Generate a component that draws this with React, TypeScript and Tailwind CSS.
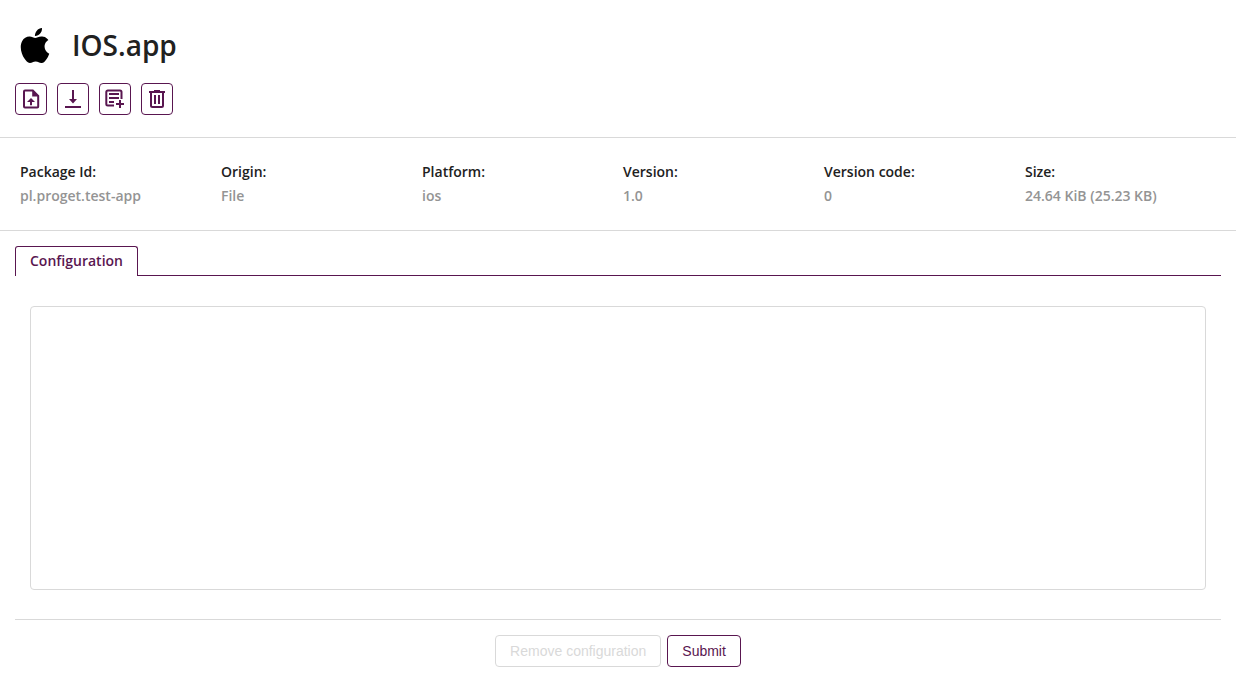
import React, { useState } from "react"
import { SiApple } from "react-icons/si"

const UploadFileIcon = () => (
  <svg viewBox="0 0 20 20" className="h-5 w-5" fill="currentColor" aria-hidden="true">
    <path
      fillRule="evenodd"
      d="M4 0.5H12.2L18.2 6.5V17.5A2 2 0 0 1 16.2 19.5H4A2 2 0 0 1 2 17.5V2.5A2 2 0 0 1 4 0.5ZM4 2.5V17.5H16.2V7.5H11.2V2.5Z"
    />
    <path d="M10 9L14 13H11V16.2H9V13H6Z" />
  </svg>
)

const DownloadIcon = () => (
  <svg viewBox="0 0 20 20" className="h-5 w-5" fill="currentColor" aria-hidden="true">
    <path d="M9 1H11V10H14L10 14.4L6 10H9ZM2 17H18V19H2Z" />
  </svg>
)

const AddNoteIcon = () => (
  <svg viewBox="0 0 20 20" className="h-5 w-5" fill="none" stroke="currentColor" strokeWidth="2" aria-hidden="true">
    <path d="M16.5 10V3A1.5 1.5 0 0 0 15 1.5H2.8A1.5 1.5 0 0 0 1.3 3V15A1.5 1.5 0 0 0 2.8 16.5H9" />
    <path d="M4 5H14M4 9H14M4 13H9" strokeWidth="1.8" />
    <path d="M15 11V19M11 15H19" />
  </svg>
)

const TrashIcon = () => (
  <svg viewBox="0 0 20 20" className="h-5 w-5" fill="none" stroke="currentColor" strokeWidth="2" aria-hidden="true">
    <path d="M2 3H18M7 2H13M4 3V16.5A1.5 1.5 0 0 0 5.5 18H14.5A1.5 1.5 0 0 0 16 16.5V3" />
    <path d="M8 6V15M12 6V15" />
  </svg>
)

const actions = [
  { label: "Upload new version", icon: <UploadFileIcon /> },
  { label: "Download", icon: <DownloadIcon /> },
  { label: "Add configuration", icon: <AddNoteIcon /> },
  { label: "Delete", icon: <TrashIcon /> },
]

const details = [
  { label: "Package Id:", value: "pl.proget.test-app" },
  { label: "Origin:", value: "File" },
  { label: "Platform:", value: "ios" },
  { label: "Version:", value: "1.0" },
  { label: "Version code:", value: "0" },
  { label: "Size:", value: "24.64 KiB (25.23 KB)" },
]

const App: React.FC = () => {
  const [config, setConfig] = useState("")

  const handleSubmit = (e: React.FormEvent) => {
    e.preventDefault()
  }

  return (
    <main className="bg-white font-['Open_Sans',sans-serif] text-sm font-semibold text-[#212121]">
      <header className="border-b border-[#d9d9d9] px-[15px] pt-[25px] pb-[22px]">
        <div className="flex items-center gap-[17px]">
          <SiApple className="h-[35px] w-10 text-black" />
          <h1 className="text-[28px] leading-10 font-semibold">IOS.app</h1>
        </div>
        <div className="mt-[18px] flex gap-2.5">
          {actions.map(action => (
            <button
              key={action.label}
              type="button"
              aria-label={action.label}
              className="flex h-8 w-8 items-center justify-center rounded border border-[#591650] text-[#591650]"
            >
              {action.icon}
            </button>
          ))}
        </div>
      </header>

      <dl className="grid grid-cols-6 border-b border-[#d9d9d9] px-[15px] py-[22px]">
        {details.map(item => (
          <div key={item.label} className="px-[5px] leading-6">
            <dt>{item.label}</dt>
            <dd className="text-[#949494]">{item.value}</dd>
          </div>
        ))}
      </dl>

      <section className="px-[15px] pt-[15px]">
        <div role="tablist" className="flex">
          <button
            type="button"
            role="tab"
            id="tab-configuration"
            aria-selected="true"
            aria-controls="panel-configuration"
            className="h-[30px] rounded-t-[3px] border border-b-0 border-[#591650] px-3.5 pb-0.5 text-[#591650]"
          >
            Configuration
          </button>
          <div className="flex-1 border-b border-[#591650]" />
        </div>

        <form id="panel-configuration" role="tabpanel" aria-labelledby="tab-configuration" onSubmit={handleSubmit}>
          <div className="px-[15px] pt-[30px] pb-[29px]">
            <textarea
              aria-label="Configuration"
              value={config}
              onChange={e => setConfig(e.target.value)}
              className="block h-[284px] w-full resize-none rounded border border-[#d9d9d9] p-2.5 outline-none"
            />
          </div>
          <div className="flex justify-center gap-1.5 border-t border-[#d9d9d9] py-[15px] font-['Liberation_Sans',sans-serif] font-normal">
            <button type="button" disabled className="h-8 rounded border border-[#d9d9d9] px-3.5 text-[#d9d9d9]">
              Remove configuration
            </button>
            <button type="submit" className="h-8 rounded border border-[#591650] px-3.5 text-[#591650]">
              Submit
            </button>
          </div>
        </form>
      </section>
    </main>
  )
}

export default App
